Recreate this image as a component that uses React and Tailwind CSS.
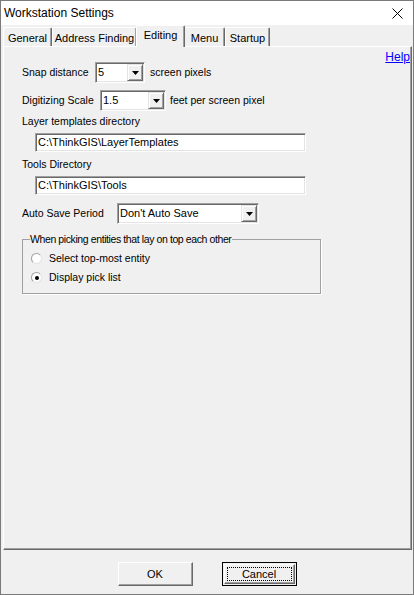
import React from 'react';

const sunken =
  'border border-t-[#a0a0a0] border-l-[#a0a0a0] border-r-white border-b-white shadow-[inset_1px_1px_0_#696969,inset_-1px_-1px_0_#e3e3e3]';

function DropButton() {
  return (
    <div className="ml-auto w-[16px] h-full border border-t-[#e3e3e3] border-l-[#e3e3e3] border-r-[#696969] border-b-[#696969] shadow-[inset_1px_1px_0_#fff,inset_-1px_-1px_0_#a0a0a0] bg-[#f0f0f0] flex items-center justify-center">
      <svg width="7" height="4" viewBox="0 0 7 4">
        <path d="M0 0h7L3.5 4z" fill="#000" />
      </svg>
    </div>
  );
}

function Combo({ value, className }) {
  return (
    <div className={`flex h-[21px] bg-white p-[1px] ${sunken} ${className}`}>
      <span className="pl-[1px] leading-[17px] text-[11px]">{value}</span>
      <DropButton />
    </div>
  );
}

function TextBox({ value }) {
  return (
    <div className={`ml-[31px] w-[271px] h-[19px] bg-white flex items-center pl-[2px] text-[11px] ${sunken}`}>
      <span>{value}</span>
    </div>
  );
}

function Radio({ checked, label }) {
  return (
    <div className="flex items-center h-[13px] ml-[8px]">
      <div className="w-[11px] h-[11px] rounded-full border border-t-[#a0a0a0] border-l-[#a0a0a0] border-r-[#e3e3e3] border-b-[#e3e3e3] bg-white flex items-center justify-center">
        {checked && <div className="w-[4px] h-[4px] rounded-full bg-black" />}
      </div>
      <span className="ml-[7px]">{label}</span>
    </div>
  );
}

function Tab({ label, selected, className }) {
  if (selected) {
    return (
      <div className={`relative z-10 h-[22px] -mb-[1px] -mx-[1px] bg-[#f0f0f0] border-t border-l border-t-white border-l-white border-r border-r-[#696969] rounded-t-[2px] shadow-[inset_-1px_0_0_#a0a0a0] flex justify-center pt-[3px] ${className}`}>
        {label}
      </div>
    );
  }
  return (
    <div className={`h-[19px] bg-[#f0f0f0] border-t border-l border-t-white border-l-white border-r border-r-[#696969] rounded-t-[2px] shadow-[inset_-1px_0_0_#a0a0a0] flex justify-center pt-[4px] ${className}`}>
      {label}
    </div>
  );
}

export default function App() {
  return (
    <div className="w-[414px] h-[595px] border border-[#7a7a7a] bg-[#f0f0f0] flex flex-col font-['Liberation_Sans',Arial,sans-serif] text-[10.5px] leading-[13px] text-black overflow-hidden">
      {/* Title bar */}
      <div className="h-[24px] bg-white flex items-center pl-[3px] pr-[10px] shrink-0">
        <span className="text-[12px]">Workstation Settings</span>
        <svg className="ml-auto" width="11" height="11" viewBox="0 0 11 11">
          <path d="M0.5 0.5l10 10M10.5 0.5l-10 10" stroke="#000" strokeWidth="1" />
        </svg>
      </div>

      {/* Tabs */}
      <div className="h-[21px] flex items-end pl-[2px] shrink-0 text-[11px]">
        <Tab label="General" className="w-[49px]" />
        <Tab label="Address Finding" className="w-[85px]" />
        <Tab label="Editing" selected className="w-[49px]" />
        <Tab label="Menu" className="w-[41px]" />
        <Tab label="Startup" className="w-[45px]" />
      </div>

      {/* Panel */}
      <div className="flex-1 ml-[2px] mr-[1px] border border-t-white border-l-white border-r-[#696969] border-b-[#696969] shadow-[inset_-1px_-1px_0_#a0a0a0] flex flex-col">
        <div className="h-[15px] flex justify-end items-start pt-[4px] pr-[1px]">
          <span className="text-[#0000ff] underline text-[12px] leading-[13px]">Help</span>
        </div>

        <div className="flex items-center h-[21px] ml-[18px]">
          <span className="w-[73px]">Snap distance</span>
          <Combo value="5" className="w-[50px]" />
          <span className="ml-[5px]">screen pixels</span>
        </div>

        <div className="flex items-center h-[21px] ml-[18px] mt-[7px]">
          <span className="w-[78px]">Digitizing Scale</span>
          <Combo value="1.5" className="w-[66px]" />
          <span className="ml-[4px]">feet per screen pixel</span>
        </div>

        <div className="ml-[18px] mt-[4px]">Layer templates directory</div>
        <div className="mt-[5px]">
          <TextBox value="C:\ThinkGIS\LayerTemplates" />
        </div>

        <div className="ml-[18px] mt-[6px]">Tools Directory</div>
        <div className="mt-[5px]">
          <TextBox value="C:\ThinkGIS\Tools" />
        </div>

        <div className="flex items-center h-[21px] ml-[18px] mt-[8px]">
          <span className="w-[95px]">Auto Save Period</span>
          <Combo value="Don't Auto Save" className="w-[142px]" />
        </div>

        <div className="ml-[18px] mt-[15px] w-[299px] h-[55px] border border-[#a0a0a0] shadow-[1px_1px_0_#fff] flex flex-col">
          <div className="-mt-[7px] ml-[7px] w-fit bg-[#f0f0f0] pr-[1px] tracking-[-0.4px]">
            When picking entities that lay on top each other
          </div>
          <div className="mt-[6px]">
            <Radio label="Select top-most entity" />
          </div>
          <div className="mt-[6px]">
            <Radio checked label="Display pick list" />
          </div>
        </div>
      </div>

      {/* Footer buttons */}
      <div className="h-[44px] shrink-0 flex justify-center items-start pt-[12px] gap-[29px] text-[11px]">
        <div className="w-[75px] h-[24px] bg-[#f0f0f0] border border-t-white border-l-white border-r-[#696969] border-b-[#696969] shadow-[inset_-1px_-1px_0_#a0a0a0] flex items-center justify-center">
          OK
        </div>
        <div className="w-[75px] h-[24px] bg-[#f0f0f0] border border-black p-[1px]">
          <div className="w-full h-full border border-t-white border-l-white border-r-[#696969] border-b-[#696969] shadow-[inset_-1px_-1px_0_#a0a0a0] p-[2px]">
            <div className="w-full h-full border border-dotted border-black flex items-center justify-center">
              Cancel
            </div>
          </div>
        </div>
      </div>
    </div>
  );
}
